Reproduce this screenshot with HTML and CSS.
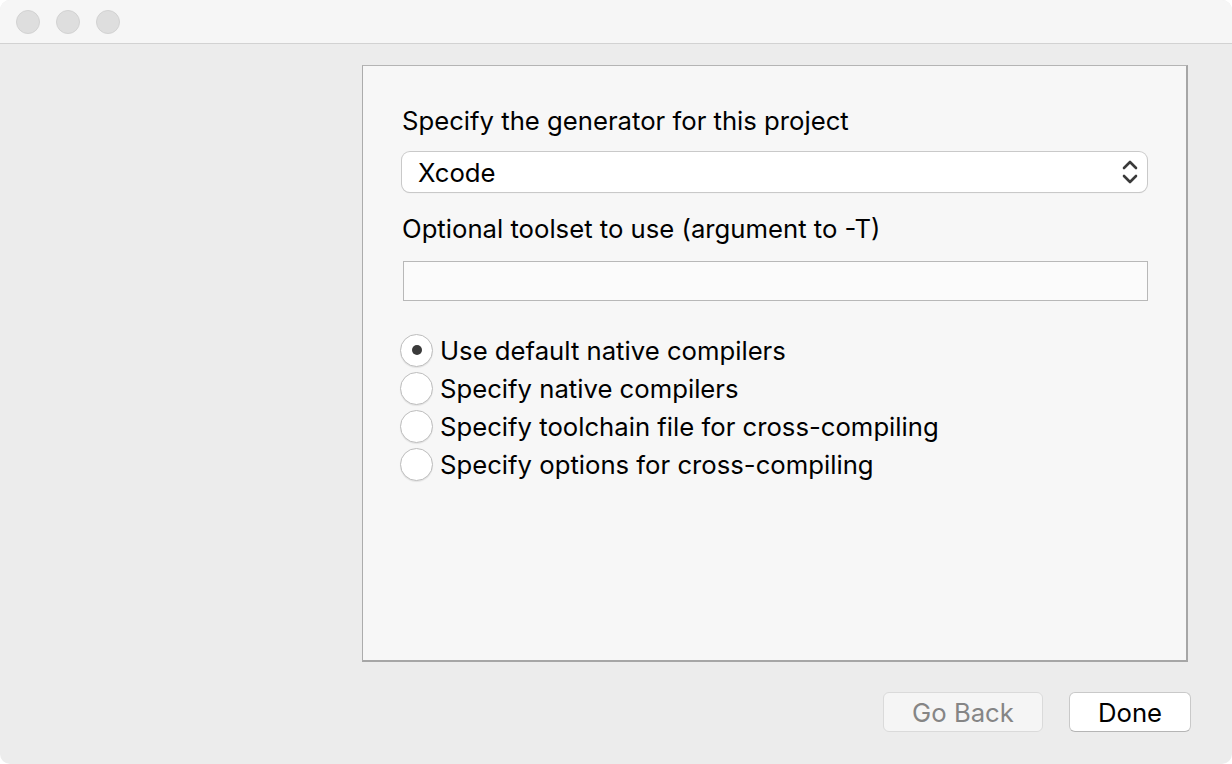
FILE: index.html
```html
<!DOCTYPE html>
<html>
<head>
<meta charset="utf-8">
<link rel="stylesheet" href="styles.css">
</head>
<body>
<div class="window">
  <div class="titlebar">
    <span class="light"></span>
    <span class="light"></span>
    <span class="light"></span>
  </div>
  <div class="content">
    <div class="panel">
      <div class="label">Specify the generator for this project</div>
      <div class="select">
        <span class="select-text">Xcode</span>
        <svg class="chev" width="18" height="26" viewBox="0 0 18 26">
          <path d="M3 9 L9 3 L15 9" fill="none" stroke="#3a3a3a" stroke-width="2.6" stroke-linecap="round" stroke-linejoin="round"/>
          <path d="M3 17 L9 23 L15 17" fill="none" stroke="#3a3a3a" stroke-width="2.6" stroke-linecap="round" stroke-linejoin="round"/>
        </svg>
      </div>
      <div class="label label-2">Optional toolset to use (argument to -T)</div>
      <div class="input"></div>
      <div class="radios">
        <div class="radio-row"><span class="radio checked"></span><span class="radio-label">Use default native compilers</span></div>
        <div class="radio-row"><span class="radio"></span><span class="radio-label">Specify native compilers</span></div>
        <div class="radio-row"><span class="radio"></span><span class="radio-label">Specify toolchain file for cross-compiling</span></div>
        <div class="radio-row"><span class="radio"></span><span class="radio-label">Specify options for cross-compiling</span></div>
      </div>
    </div>
    <div class="footer">
      <div class="btn btn-disabled">Go Back</div>
      <div class="btn btn-default">Done</div>
    </div>
  </div>
</div>
</body>
</html>
```

FILE: styles.css
```css
html, body {
  margin: 0;
  padding: 0;
  background: #ffffff;
}
body {
  font-family: Inter, "Noto Sans", "Liberation Sans", sans-serif;
  color: #000;
}
.window {
  width: 1232px;
  height: 764px;
  background: #ececec;
  border-radius: 10px;
  overflow: hidden;
  display: flex;
  flex-direction: column;
}
.titlebar {
  flex: none;
  height: 43px;
  background: #f6f6f6;
  border-bottom: 1px solid #d2d2d2;
  display: flex;
  align-items: center;
  gap: 16px;
  padding-left: 16px;
}
.light {
  width: 22px;
  height: 22px;
  border-radius: 50%;
  background: #dedede;
  border: 1px solid #d2d2d2;
}
.content {
  flex: 1;
  display: flex;
  flex-direction: column;
  padding: 21px 44px 0 362px;
}
.panel {
  flex: none;
  height: 597px;
  box-sizing: border-box;
  background: #f7f7f7;
  border-top: 1px solid #b4b4b4;
  border-left: 1px solid #acacac;
  border-right: 2px solid #a6a6a6;
  border-bottom: 2px solid #a6a6a6;
  padding: 40px 38px 0 39px;
  display: flex;
  flex-direction: column;
}
.label {
  font-size: 25.7px;
  line-height: 30px;
  height: 30px;
}
.select {
  margin-top: 16px;
  height: 40px;
  background: #ffffff;
  border-radius: 8px;
  box-shadow: 0 0 0 1px #c9c9c9, 0 1px 1px rgba(0,0,0,0.18);
  display: flex;
  align-items: center;
  justify-content: space-between;
  padding: 0 8px 0 16px;
  margin-right: 1px;
}
.select-text {
  font-size: 25.7px;
}
.chev {
  display: block;
}
.label-2 {
  margin-top: 22px;
}
.input {
  flex: none;
  margin-top: 17px;
  height: 38px;
  background: #fbfbfb;
  border: 1px solid #b8b8b8;
  margin-left: 1px;
}
.radios {
  margin-top: 30px;
  display: flex;
  flex-direction: column;
}
.radio-row {
  height: 38px;
  display: flex;
  align-items: center;
  gap: 7px;
  margin-left: -2px;
}
.radio {
  width: 31px;
  height: 31px;
  border-radius: 50%;
  background: #ffffff;
  border: 1px solid #bdbdbd;
  box-shadow: 0 1px 1px rgba(0,0,0,0.08);
  display: flex;
  align-items: center;
  justify-content: center;
  flex: none;
}
.radio.checked::after {
  content: "";
  width: 10px;
  height: 10px;
  border-radius: 50%;
  background: #3a3a3a;
}
.radio-label {
  font-size: 25.7px;
}
.footer {
  flex: none;
  display: flex;
  justify-content: flex-end;
  gap: 26px;
  margin-top: 30px;
  margin-right: -3px;
}
.btn {
  height: 38px;
  border-radius: 6px;
  font-size: 25.7px;
  display: flex;
  align-items: center;
  justify-content: center;
}
.btn-disabled {
  width: 158px;
  background: #f5f5f5;
  border: 1px solid #dadada;
  color: #858585;
}
.btn-default {
  width: 120px;
  background: #ffffff;
  border: 1px solid #c9c9c9;
  border-bottom-color: #b5b5b5;
  color: #000;
}
```
